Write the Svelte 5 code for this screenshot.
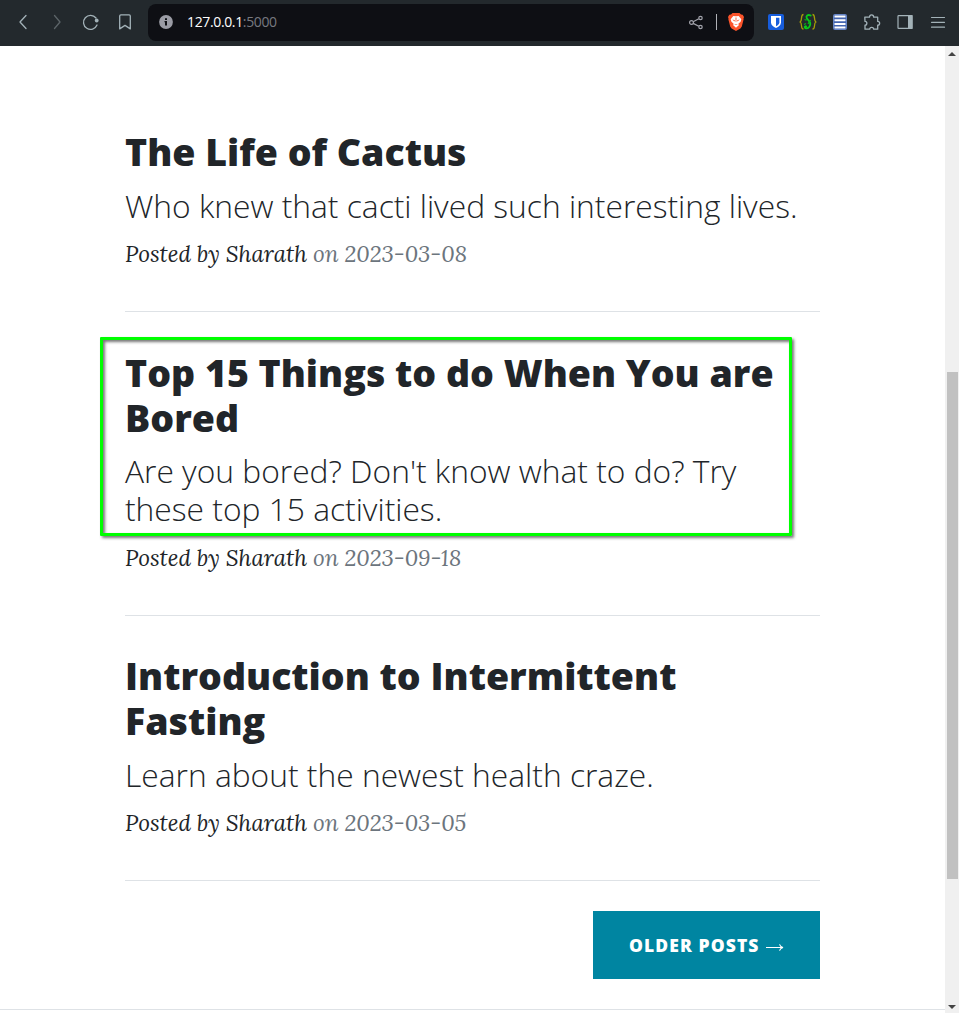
<script>
  const posts = [
    { title: ['The Life of Cactus'], sub: ['Who knew that cacti lived such interesting lives.'], date: '2023-03-08' },
    { title: ['Top 15 Things to do When You are', 'Bored'], sub: ["Are you bored? Don't know what to do? Try", 'these top 15 activities.'], date: '2023-09-18', marked: true },
    { title: ['Introduction to Intermittent', 'Fasting'], sub: ['Learn about the newest health craze.'], date: '2023-03-05' }
  ];
</script>

<div class="window">
  <header>
    <svg class="nav" width="148" height="46" viewBox="0 0 148 46" fill="none" stroke="#a3b2b8" stroke-width="1.3" stroke-linecap="round" stroke-linejoin="round">
      <path d="M26 15.500l-6 6.500 6 6.500" />
      <path d="M54.500 15.500l5.500 6.500-5.500 6.500" stroke="#5c6468" />
      <path d="M96 18a7 7 0 1 0 1 7" />
      <circle cx="96.700" cy="20.500" r="1.900" fill="#a3b2b8" stroke="none" />
      <path d="M119.700 16a1.200 1.200 0 0 1 1.200-1.200h8.200a1.200 1.200 0 0 1 1.200 1.200v12.900l-5.300-3.500-5.300 3.500z" />
    </svg>
    <div class="address">
      <svg class="info" width="14" height="14" viewBox="0 0 14 14"><circle cx="7" cy="7" r="6.900" fill="#9b9ca5" /><path d="M6 3.200h2v1.700H6zM5.500 6H8v4.500H6V7.300h-.5z" fill="#0e0f14" /></svg>
      <span class="url">127.0.0.1<i>:5000</i></span>
      <svg class="share" width="16" height="16" viewBox="0 0 16 16" fill="none" stroke="#a2a3ab" stroke-width="1.200"><circle cx="3.500" cy="7.500" r="1.900" /><circle cx="12.500" cy="3" r="1.700" /><circle cx="12.500" cy="12" r="1.700" /><path d="M5.200 6.700l5.600-2.900M5.200 8.400l5.600 2.900" /></svg>
      <span class="bar"></span>
      <svg class="lion" width="16" height="18" viewBox="0 0 16 18"><path d="M4.500 0h7L13 1.500l1.700.2L16 4l-.5 1.500.1 1-1.800 7-1.400 2L8 18l-4.400-2.500-1.400-2-1.800-7 .1-1L0 4l1.300-2.300L3 1.500z" fill="#fb542b" /><path d="M5.300 2.900L8 3.300l2.700-.4 2.600 3.400-.7 2.500-2.200 2 .4 1.400L8 14.700l-2.800-2.500.4-1.400-2.200-2-.7-2.500z" fill="#fff" /><path d="M4.300 6.500l2.600.8-.4 1.300zM11.700 6.500l-2.600.8.4 1.300zM6 11l2 1 2-1-2 .300zM7.500 4.500h1L8.300 9h-.6z" fill="#fb542b" /></svg>
    </div>
    <svg class="ext" width="205" height="46" viewBox="754 0 205 46" fill="none">
      <rect x="768" y="14" width="16" height="16" rx="2" fill="#175ddc" /><path d="M771 16h10v6.500c0 2.500-2.300 4.400-5 5.500-2.700-1.100-5-3-5-5.500z" fill="#fff" /><path d="M776 17.700h3.400v4.800c0 1.500-1.400 2.700-3.400 3.800z" fill="#175ddc" />
      <path d="M803.500 14.500c-3.400 0-.8 6-3.300 7.500 2.500 1.500-.1 7 3.300 7M812.500 14.500c3.400 0 .8 6 3.300 7.500-2.500 1.500.1 7-3.300 7" stroke="#a39b08" stroke-width="1.300" /><path d="M810.700 15.500c-3-1.500-5 .7-3.900 2.700s3.700 3 3.500 5.800-2.300 5-4.400 4.300-1.100-2.800.300-1.800" stroke="#08cc18" stroke-width="1.800" stroke-linecap="round" /><path d="M804.500 19.500l2 .8M804 24.500l2-1M810.500 20l-2.500 4" stroke="#08b816" stroke-width="1.200" />
      <rect x="833.500" y="14.500" width="13" height="15" rx="1" fill="#4264b0" stroke="#6584c5" /><path d="M834.500 16.500h11M834.500 20.200h11M834.500 23.900h11M834.500 27.500h11" stroke="#fff" stroke-width="2" />
      <path d="M864.800 17.200h4.700c0-3 4.200-3 4.200 0h4v4.200c2.600 0 2.600 3.800 0 3.800v4h-4c0-2.500-4-2.500-4 0h-4.700v-4c2.500 0 2.500-3.800 0-3.800z" stroke="#a3b2b8" stroke-width="1.300" stroke-linejoin="round" />
      <rect x="898" y="15.600" width="14" height="12.800" rx=".7" stroke="#a3b2b8" stroke-width="1.200" /><path d="M908 15h4.500v14H908z" fill="#a3b2b8" />
      <path d="M931.500 17.500h13M931.500 22.300h13M931.500 27.200h13" stroke="#a3b2b8" stroke-width="1.200" stroke-linecap="round" />
    </svg>
  </header>

  <div class="view">
    <main>
      {#each posts as p}
        <article>
          <h2>{#each p.title as line}<span>{line}</span>{/each}</h2>
          <h3>{#each p.sub as line}<span>{line}</span>{/each}</h3>
          <p class="meta"><a href="#top">Posted by Sharath</a> <span>on</span> <time>{p.date}</time></p>
          {#if p.marked}<div class="mark"></div>{/if}
        </article>
      {/each}
      <a class="older" href="#older"><span>Older Posts</span><svg width="19" height="9" viewBox="0 0 19 9" fill="none" stroke="#fff" stroke-width="1.100"><path d="M0 4.500h17M13.500 1.300c.6 1.800 1.800 2.800 3.500 3.200-1.700.4-2.900 1.400-3.500 3.200" /></svg></a>
    </main>
    <footer></footer>
    <aside>
      <i class="up"></i>
      <div class="thumb"></div>
      <i class="down"></i>
    </aside>
  </div>
</div>

<style>
  :global(body) { margin: 0; overflow: hidden; background: #fff; }
  .window { height: 1013px; display: flex; flex-direction: column; }
  header { height: 46px; flex: none; display: flex; background: #23292d; }
  header svg { display: block; flex: none; }
  .address { width: 606px; height: 37px; margin-top: 4px; box-sizing: border-box; padding: 0 10px 0 11px; border-radius: 8px; background: #0e0f14; display: flex; align-items: center; }
  .info, .lion { margin-bottom: 1px; }
  .url { flex: 1; margin: 0 0 2px 14px; color: #fff; font: 14px/20px "Open Sans", sans-serif; letter-spacing: -.36px; }
  .url i { font-style: normal; color: #777980; }
  .bar { width: 1px; height: 16px; margin: 0 11px 1px 12px; background: #b0b1b6; }
  .view { flex: 1; display: grid; grid-template-columns: 945px 14px; grid-template-rows: 963px 4px; }
  main { padding: 83px 125px 0; display: flex; flex-direction: column; font-family: "Open Sans", sans-serif; color: #212529; }
  article { position: relative; padding-bottom: 39px; margin-bottom: 37.500px; border-bottom: 1px solid #dee2e6; }
  article:nth-child(3) { margin-bottom: 30px; }
  h2, h3, p { margin: 0; white-space: nowrap; }
  h2 span, h3 span { display: block; }
  h2 { font-size: 37.500px; font-weight: 800; line-height: 45px; margin-bottom: 12.500px; }
  h3 { font-size: 31.760px; font-weight: 300; line-height: 38px; margin-bottom: 11.500px; }
  .meta { font: italic 22.500px/36px Lora, "Liberation Serif", serif; color: #6c757d; }
  .meta a { color: #212529; text-decoration: none; }
  .mark { position: absolute; left: -25px; top: -12.500px; width: 686px; height: 193px; border: 3px solid #0f0; border-radius: 1px; box-shadow: 2px 2px 3px #0008, inset 2px 2px 3px #0008; }
  .older { align-self: flex-end; display: flex; align-items: center; width: 227px; height: 68px; box-sizing: border-box; padding-left: 36px; background: #0085a1; color: #fff; font-size: 17.500px; font-weight: 800; line-height: 68px; letter-spacing: 1.094px; text-transform: uppercase; text-decoration: none; white-space: nowrap; }
  .older span { width: 137px; }
  .older svg { margin-top: 4px; }
  footer { grid-row: 2; border-top: 1px solid #dee2e6; }
  aside { grid-column: 2; grid-row: 1 / 3; background: #f0f0f0; display: flex; flex-direction: column; align-items: center; }
  aside i { border: 4px solid transparent; }
  .up { border-top: 0 !important; border-bottom-color: #444 !important; margin-top: 6px; }
  .down { border-bottom: 0 !important; border-top-color: #444 !important; margin-top: 126px; }
  .thumb { width: 11px; height: 507px; margin-top: 316px; background: #c1c1c1; }
</style>
